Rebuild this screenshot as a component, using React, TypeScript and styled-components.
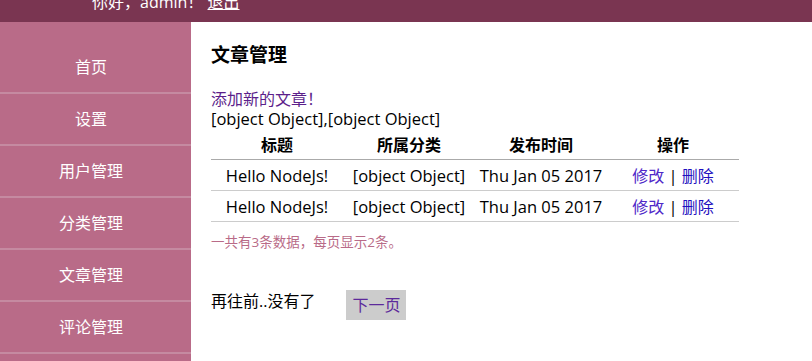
import React from 'react'
import styled, { createGlobalStyle } from 'styled-components'

const GlobalStyle = createGlobalStyle`
    html, body {
        margin: 0;
        padding: 0;
        background: #fff;
    }
    body {
        font-family: "Open Sans", "Noto Sans CJK SC", sans-serif;
        font-size: 16px;
        color: #000;
    }
`

const menu = ['首页', '设置', '用户管理', '分类管理', '文章管理', '评论管理']

const articles = [
    { title: 'Hello NodeJs!', category: '[object Object]', time: 'Thu Jan 05 2017' },
    { title: 'Hello NodeJs!', category: '[object Object]', time: 'Thu Jan 05 2017' },
]

export default function App() {
    return (
        <>
            <GlobalStyle />
            <TopBar>
                <Greeting>
                    你好，admin！ <Logout href="#">退出</Logout>
                </Greeting>
            </TopBar>
            <Layout>
                <Sidebar>
                    {menu.map((item) => (
                        <MenuItem key={item}>{item}</MenuItem>
                    ))}
                </Sidebar>
                <Main>
                    <Title>文章管理</Title>
                    <Line>
                        <AddLink href="#">添加新的文章！</AddLink>
                    </Line>
                    <Line>[object Object],[object Object]</Line>
                    <Table>
                        <thead>
                            <tr>
                                <Th>标题</Th>
                                <Th>所属分类</Th>
                                <Th>发布时间</Th>
                                <Th>操作</Th>
                            </tr>
                        </thead>
                        <tbody>
                            {articles.map((a, i) => (
                                <tr key={i}>
                                    <Td>{a.title}</Td>
                                    <Td>{a.category}</Td>
                                    <Td>{a.time}</Td>
                                    <Td>
                                        <ActionLink href="#" $tone="edit">修改</ActionLink> |{' '}
                                        <ActionLink href="#" $tone="delete">删除</ActionLink>
                                    </Td>
                                </tr>
                            ))}
                        </tbody>
                    </Table>
                    <Summary>一共有3条数据，每页显示2条。</Summary>
                    <Pager>
                        <PagerText>再往前..没有了</PagerText>
                        <NextButton href="#">下一页</NextButton>
                    </Pager>
                </Main>
            </Layout>
        </>
    )
}

const TopBar = styled.div`
    height: 22px;
    background: #7a3551;
    overflow: hidden;
    padding-left: 92px;
`

const Greeting = styled.div`
    margin-top: -10px;
    line-height: 24px;
    font-size: 16px;
    color: #fff;
`

const Logout = styled.a`
    color: #fff;
    text-decoration: underline;
`

const Layout = styled.div`
    display: flex;
    min-height: 339px;
`

const Sidebar = styled.ul`
    width: 191px;
    flex-shrink: 0;
    margin: 0;
    padding: 20px 0 0;
    box-sizing: border-box;
    background: #b96b88;
    list-style: none;
`

const MenuItem = styled.li`
    height: 50px;
    line-height: 50px;
    text-align: center;
    color: #fff;
    font-size: 16px;
    border-bottom: 2px solid #c58aa1;
    padding-right: 9px;
`

const Main = styled.div`
    flex: 1;
    padding: 20px;
`

const Title = styled.h3`
    margin: 0 0 21px;
    font-size: 19px;
    line-height: 26px;
    font-weight: bold;
`

const Line = styled.div`
    line-height: 20px;
    font-size: 16.5px;
`

const AddLink = styled.a`
    color: #5c1f8b;
    text-decoration: none;
    font-size: 16px;
`

const Table = styled.table`
    width: 528px;
    table-layout: fixed;
    border-collapse: collapse;
`

const Th = styled.th`
    height: 30px;
    padding: 0;
    text-align: center;
    font-weight: bold;
    border-bottom: 1px solid #aaa;
`

const Td = styled.td`
    height: 30px;
    padding: 0;
    text-align: center;
    font-size: 16.5px;
    border-bottom: 1px solid #ccc;
`

const ActionLink = styled.a<{ $tone: 'edit' | 'delete' }>`
    color: ${(p) => (p.$tone === 'edit' ? '#4e27c8' : '#1f10c0')};
    text-decoration: none;
    font-size: 16px;
`

const Summary = styled.div`
    margin-top: 12px;
    font-size: 13.5px;
    line-height: 17px;
    color: #b96b88;
`

const Pager = styled.div`
    display: flex;
    align-items: flex-start;
    gap: 31px;
    margin-top: 39px;
`

const PagerText = styled.span`
    margin-top: 1px;
    line-height: 20px;
`

const NextButton = styled.a`
    display: block;
    padding: 0 6px;
    line-height: 30px;
    background: #ccc;
    color: #5c2a9b;
    text-decoration: none;
`
